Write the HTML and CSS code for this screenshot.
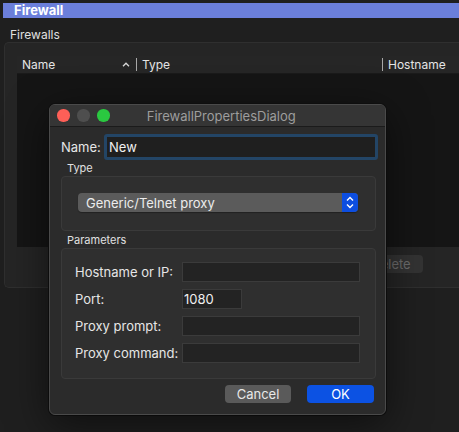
FILE: index.html
```html
<!DOCTYPE html>
<html>
<head>
<meta charset="utf-8">
<link rel="stylesheet" href="styles.css">
</head>
<body>
<div class="window">
  <div class="win-title">Firewall</div>
  <div class="section-label">Firewalls</div>
  <div class="groupbox">
    <div class="table">
      <div class="thead">
        <div class="th th-name">Name
          <svg class="sort" width="8" height="5" viewBox="0 0 8 5"><path d="M1 4.2 L4 1.2 L7 4.2" fill="none" stroke="#d8d8d8" stroke-width="1.3"/></svg>
        </div>
        <div class="th th-type">Type</div>
        <div class="th th-host">Hostname</div>
      </div>
    </div>
    <div class="actions">
      <div class="btn-disabled">Delete</div>
    </div>
  </div>
</div>

<div class="dialog">
  <div class="dlg-titlebar">
    <div class="lights">
      <span class="light red"></span>
      <span class="light gray"></span>
      <span class="light green"></span>
    </div>
    <div class="dlg-title">FirewallPropertiesDialog</div>
  </div>
  <div class="dlg-body">
    <div class="name-row">
      <span class="name-label">Name:</span>
      <div class="name-input">New</div>
    </div>
    <div class="box-label type-label">Type</div>
    <div class="box type-box">
      <div class="popup">
        <span class="popup-text">Generic/Telnet proxy</span>
        <span class="stepper">
          <svg width="16" height="19" viewBox="0 0 16 19"><path d="M5 7.5 L8 4.5 L11 7.5 M5 11.5 L8 14.5 L11 11.5" fill="none" stroke="#fff" stroke-width="1.4"/></svg>
        </span>
      </div>
    </div>
    <div class="box-label">Parameters</div>
    <div class="box params-box">
      <div class="prow"><span class="plabel">Hostname or IP:</span><div class="field"></div></div>
      <div class="prow"><span class="plabel">Port:</span><div class="field short">1080</div></div>
      <div class="prow"><span class="plabel">Proxy prompt:</span><div class="field"></div></div>
      <div class="prow"><span class="plabel">Proxy command:</span><div class="field"></div></div>
    </div>
    <div class="buttons">
      <div class="btn cancel">Cancel</div>
      <div class="btn ok">OK</div>
    </div>
  </div>
</div>
</body>
</html>
```

FILE: styles.css
```css
html, body {
  margin: 0;
  padding: 0;
}
body {
  width: 459px;
  height: 432px;
  overflow: hidden;
  background: #1f1f1f;
  font-family: Inter, "Noto Sans", "Liberation Sans", sans-serif;
  color: #e4e4e4;
  position: relative;
}
.window {
  padding-top: 3px;
  background: #1f1f1f;
  height: 429px;
}
.win-title {
  margin-left: 3px;
  height: 15px;
  line-height: 15px;
  background: #6b7fdb;
  color: #fff;
  font-weight: 700;
  font-size: 13px;
  padding-left: 11px;
}
.section-label {
  height: 24px;
  padding-left: 10px;
  font-size: 12px;
  line-height: 12px;
  padding-top: 11px;
  box-sizing: border-box;
  color: #e0e0e0;
}
.groupbox {
  margin-left: 4px;
  height: 246px;
  box-sizing: border-box;
  border: 1px solid #2f2f2f;
  border-right: none;
  border-radius: 5px 0 0 5px;
  background: #252525;
  padding: 13px 0 0 12px;
}
.table {
  height: 191px;
  background: #151515;
}
.thead {
  display: flex;
  height: 17px;
  background: #262626;
  border-bottom: 1px solid #1a1a1a;
  font-size: 12px;
  line-height: 17px;
  color: #e4e4e4;
}
.th {
  position: relative;
  box-sizing: border-box;
  padding-left: 5px;
  display: flex;
  align-items: center;
}
.th-name {
  width: 120px;
  justify-content: space-between;
  padding-right: 6px;
  border-right: 1px solid #a8a8a8;
  height: 13px;
  margin-top: 2px;
}
.th-type {
  width: 246px;
  border-right: 1px solid #a8a8a8;
  height: 13px;
  margin-top: 2px;
}
.th-host {
  flex: 1;
  height: 13px;
  margin-top: 2px;
}
.sort {
  display: block;
}
.actions {
  display: flex;
  justify-content: flex-end;
  padding: 8px 36px 0 0;
}
.btn-disabled {
  width: 64px;
  height: 18px;
  line-height: 18px;
  border-radius: 4px;
  background: #333333;
  color: #6c6c6c;
  font-size: 13px;
  text-align: center;
}

/* dialog */
.dialog {
  position: absolute;
  left: 49px;
  top: 104px;
  width: 337px;
  height: 311px;
  box-sizing: border-box;
  background: #2b2b2b;
  border: 1px solid #4a4a4a;
  border-radius: 6px;
  box-shadow: 0 10px 40px rgba(0, 0, 0, 0.55), 0 0 0 1px #111;
  overflow: hidden;
}
.dlg-titlebar {
  height: 21px;
  background: #353535;
  border-bottom: 1px solid #1b1b1b;
  display: flex;
  align-items: center;
  position: relative;
}
.lights {
  display: flex;
  gap: 7.5px;
  padding-left: 7px;
}
.light {
  width: 12.5px;
  height: 12.5px;
  border-radius: 50%;
  display: block;
}
.red { background: #fe5f57; }
.gray { background: #4e4e4e; }
.green { background: #2ac840; }
.dlg-title {
  flex: 1;
  text-align: center;
  font-size: 13px;
  color: #9d9d9d;
  margin-left: -52px;
}
.dlg-body {
  padding: 7px 7px 0 10px;
}
.name-row {
  display: flex;
  align-items: center;
  height: 26px;
}
.name-label {
  font-size: 13px;
  width: 43px;
  color: #e6e6e6;
  padding-left: 1px;
}
.name-input {
  width: 274px;
  height: 26px;
  box-sizing: border-box;
  border: 3px solid #234566;
  border-radius: 3px;
  background: #1f1f1f;
  color: #f0f0f0;
  font-size: 13px;
  line-height: 20px;
  padding-left: 2px;
}
.box-label {
  font-size: 11px;
  color: #e0e0e0;
  padding-left: 7px;
  height: 15px;
  line-height: 15px;
}
.type-label {
  margin-top: 1px;
}
.box {
  width: 315px;
  box-sizing: border-box;
  border: 1px solid #3a3a3a;
  border-radius: 4px;
  background: #2f2f2f;
  margin-left: 1px;
}
.type-box {
  height: 55px;
  padding: 16px 0 0 16px;
  margin-bottom: 2px;
}
.popup {
  width: 280px;
  height: 19px;
  border-radius: 4px;
  background: #5b5b5b;
  display: flex;
  align-items: center;
  overflow: hidden;
  box-shadow: 0 1px 1px rgba(0,0,0,0.3);
}
.popup-text {
  flex: 1;
  font-size: 13px;
  color: #ececec;
  padding-left: 8px;
}
.stepper {
  width: 16px;
  height: 19px;
  background: #0d4ee0;
  display: block;
}
.stepper svg { display: block; }
.params-box {
  height: 131px;
  padding: 13px 0 0 13px;
}
.prow {
  display: flex;
  align-items: center;
  height: 20px;
  margin-bottom: 7px;
}
.plabel {
  width: 107px;
  font-size: 13px;
  color: #e6e6e6;
}
.field {
  width: 178px;
  height: 20px;
  box-sizing: border-box;
  background: #232323;
  border: 1px solid #3b3b3b;
  font-size: 13px;
  color: #f0f0f0;
  line-height: 18px;
  padding-left: 1px;
}
.field.short {
  width: 60px;
}
.buttons {
  display: flex;
  justify-content: flex-end;
  gap: 16px;
  padding: 6px 4px 0 0;
}
.btn {
  height: 18px;
  line-height: 18px;
  border-radius: 4px;
  font-size: 13px;
  text-align: center;
}
.cancel {
  width: 66px;
  background: #5a5a5a;
  color: #e8e8e8;
}
.ok {
  width: 67px;
  background: #0c52e3;
  color: #fff;
}
```
